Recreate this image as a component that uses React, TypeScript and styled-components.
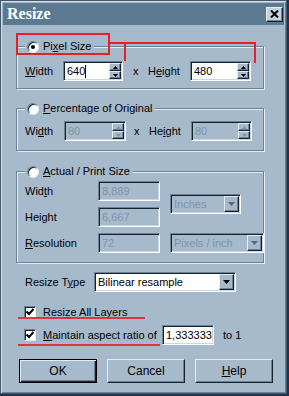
import styled, { createGlobalStyle } from "styled-components";

const BG = "#a6bacb";
const DARK = "#6b8396";
const LIGHT = "#e4edf3";
const BLACK = "#17222c";
const MUTED = "#7d95a9";
const RED = "#e3202b";

const GlobalStyle = createGlobalStyle`
  html, body {
    margin: 0;
    padding: 0;
  }
  body {
    width: 289px;
    height: 396px;
    overflow: hidden;
    background: #22324a;
    font-family: "Liberation Sans", Arial, sans-serif;
    font-size: 11px;
    color: #000;
  }
`;

const Dialog = styled.div`
  position: relative;
  width: 287px;
  height: 394px;
  box-sizing: border-box;
  padding: 2px;
  background: ${BG};
  border: 1px solid #44596d;
  box-shadow: inset 1px 1px 0 #d3dfe8, inset -1px -1px 0 #6a8194;
  display: flex;
  flex-direction: column;
`;

const TitleBar = styled.div`
  height: 22px;
  display: flex;
  align-items: center;
  justify-content: space-between;
  padding: 0 1px 0 4px;
  background: #5b7a91;
  color: #fff;
  font-family: "Liberation Serif", "Times New Roman", serif;
  font-weight: 700;
  font-size: 16px;
`;

const raised = `
  background: ${BG};
  border: 1px solid;
  border-color: ${LIGHT} ${BLACK} ${BLACK} ${LIGHT};
  box-shadow: inset -1px -1px 0 ${DARK};
  box-sizing: border-box;
`;

const CloseButton = styled.div`
  ${raised}
  background: #c4d3de;
  width: 17px;
  height: 15px;
  display: grid;
  place-items: center;
`;

const Body = styled.div`
  display: flex;
  flex-direction: column;
  padding-left: 13px;
`;

const Group = styled.fieldset<{ $top: number; $padTop: number; $padBottom: number }>`
  margin: ${({ $top }) => $top}px 0 0 0;
  width: 248px;
  box-sizing: border-box;
  min-inline-size: 0;
  padding: ${({ $padTop }) => $padTop}px 8px ${({ $padBottom }) => $padBottom}px 8px;
  border: 1px solid ${DARK};
  box-shadow: inset 1px 1px 0 ${LIGHT}, 1px 1px 0 ${LIGHT};
`;

const Legend = styled.legend`
  display: flex;
  align-items: center;
  gap: 4px;
  height: 13px;
  padding: 0 3px 0 2px;
  background: ${BG};
  line-height: 13px;
`;

const Radio = styled.span<{ $checked?: boolean }>`
  width: 12px;
  height: 12px;
  box-sizing: border-box;
  border-radius: 50%;
  background: #fff;
  border: 1px solid;
  border-color: ${DARK} ${LIGHT} ${LIGHT} ${DARK};
  box-shadow: inset 1px 1px 0 ${BLACK};
  display: grid;
  place-items: center;
  &::after {
    content: "";
    width: 4px;
    height: 4px;
    border-radius: 50%;
    background: ${({ $checked }) => ($checked ? "#000" : "transparent")};
  }
`;

const Row = styled.div`
  display: flex;
  align-items: center;
  height: 20px;
`;

const Label = styled.span<{ $w?: number; $ml?: number }>`
  width: ${({ $w }) => ($w ? `${$w}px` : "auto")};
  margin-left: ${({ $ml }) => $ml ?? 0}px;
  flex-shrink: 0;
  white-space: nowrap;
  line-height: 13px;
`;

const Field = styled.div<{ $w: number; $disabled?: boolean; $ml?: number }>`
  width: ${({ $w }) => $w}px;
  height: 20px;
  margin-left: ${({ $ml }) => $ml ?? 0}px;
  box-sizing: border-box;
  flex-shrink: 0;
  display: flex;
  align-items: center;
  padding-left: 3px;
  background: ${({ $disabled }) => ($disabled ? BG : "#fff")};
  color: ${({ $disabled }) => ($disabled ? MUTED : "#000")};
  border: 1px solid;
  border-color: ${DARK} #fff #fff ${DARK};
  box-shadow: inset 1px 1px 0 ${BLACK}, inset -1px -1px 0 #c9d6e0;
  white-space: nowrap;
  overflow: hidden;
`;

const Caret = styled.span`
  width: 1px;
  height: 13px;
  background: #000;
`;

const Spinner = styled.div`
  margin-left: auto;
  margin-right: 1px;
  width: 12px;
  height: 16px;
  display: flex;
  flex-direction: column;
`;

const SpinButton = styled.div`
  ${raised}
  height: 8px;
  display: grid;
  place-items: center;
`;

const DropButton = styled.div`
  ${raised}
  margin-left: auto;
  margin-right: 1px;
  width: 15px;
  height: 16px;
  flex-shrink: 0;
  display: grid;
  place-items: center;
`;

const SizeGrid = styled.div`
  display: grid;
  grid-template-columns: 63px 62px auto;
  grid-template-rows: repeat(3, 20px);
  column-gap: 10px;
  row-gap: 6px;
  align-items: center;
  & > * {
    justify-self: start;
  }
`;

const UnitCell = styled.div<{ $rows: string }>`
  grid-column: 3;
  grid-row: ${({ $rows }) => $rows};
  align-self: center;
`;

const TypeRow = styled(Row)`
  margin-top: 9px;
  padding-left: 9px;
`;

const CheckRow = styled(Row)<{ $top: number }>`
  margin-top: ${({ $top }) => $top}px;
  padding-left: 8px;
`;

const CheckBox = styled.span`
  width: 12px;
  height: 12px;
  box-sizing: border-box;
  margin-right: 7px;
  flex-shrink: 0;
  background: #fff;
  border: 1px solid;
  border-color: ${DARK} ${LIGHT} ${LIGHT} ${DARK};
  box-shadow: inset 1px 1px 0 ${BLACK};
  display: grid;
  place-items: center;
`;

const ButtonRow = styled.div`
  display: flex;
  gap: 10px;
  margin-top: 14px;
  padding-left: 3px;
`;

const Button = styled.div<{ $default?: boolean }>`
  width: 78px;
  height: 24px;
  box-sizing: border-box;
  display: flex;
  align-items: center;
  justify-content: center;
  background: ${BG};
  border: 1px solid;
  border-color: ${({ $default }) => ($default ? "#000" : `${LIGHT} ${BLACK} ${BLACK} ${LIGHT}`)};
  box-shadow: ${({ $default }) =>
    $default
      ? `inset 1px 1px 0 ${LIGHT}, inset -1px -1px 0 ${BLACK}, inset -2px -2px 0 ${DARK}`
      : `inset -1px -1px 0 ${DARK}`};
  font-size: 12px;
`;

const Overlay = styled.svg`
  position: absolute;
  top: -1px;
  left: -1px;
  pointer-events: none;
`;

function Arrow({ up, muted }: { up?: boolean; muted?: boolean }) {
  return (
    <svg width="5" height="3" viewBox="0 0 5 3">
      <path d={up ? "M2.5 0 L5 3 L0 3 Z" : "M0 0 L5 0 L2.5 3 Z"} fill={muted ? MUTED : "#000"} />
    </svg>
  );
}

function DownArrow({ muted }: { muted?: boolean }) {
  return (
    <svg width="7" height="4" viewBox="0 0 7 4">
      <path d="M0 0 L7 0 L3.5 4 Z" fill={muted ? "#55697b" : "#000"} />
    </svg>
  );
}

function Spin({ muted }: { muted?: boolean }) {
  return (
    <Spinner>
      <SpinButton>
        <Arrow up muted={muted} />
      </SpinButton>
      <SpinButton>
        <Arrow muted={muted} />
      </SpinButton>
    </Spinner>
  );
}

function Check() {
  return (
    <svg width="8" height="8" viewBox="0 0 8 8">
      <path d="M0.5 3.5 L3 6 L7.5 1" fill="none" stroke="#000" strokeWidth="2" />
    </svg>
  );
}

export default function App() {
  return (
    <>
      <GlobalStyle />
      <Dialog>
        <TitleBar>
          <span>Resize</span>
          <CloseButton>
            <svg width="9" height="8" viewBox="0 0 9 8">
              <path d="M1 0.5 L8 7.5 M8 0.5 L1 7.5" stroke="#000" strokeWidth="2" />
            </svg>
          </CloseButton>
        </TitleBar>
        <Body>
          <Group $top={15} $padTop={8} $padBottom={7}>
            <Legend>
              <Radio $checked />
              <span>
                Pi<u>x</u>el Size
              </span>
            </Legend>
            <Row>
              <Label $w={38}>
                <u>W</u>idth
              </Label>
              <Field $w={60}>
                640
                <Caret />
                <Spin />
              </Field>
              <Label $ml={10} $w={15}>
                x
              </Label>
              <Label $w={42}>
                H<u>e</u>ight
              </Label>
              <Field $w={61}>
                480
                <Spin />
              </Field>
            </Row>
          </Group>

          <Group $top={13} $padTop={6} $padBottom={9}>
            <Legend>
              <Radio />
              <span>
                <u>P</u>ercentage of Original
              </span>
            </Legend>
            <Row>
              <Label $w={39}>
                Wi<u>d</u>th
              </Label>
              <Field $w={62} $disabled>
                80
                <Spin muted />
              </Field>
              <Label $ml={8} $w={15}>
                x
              </Label>
              <Label $w={42}>
                He<u>i</u>ght
              </Label>
              <Field $w={61} $disabled>
                80
                <Spin muted />
              </Field>
            </Row>
          </Group>

          <Group $top={14} $padTop={3} $padBottom={9}>
            <Legend>
              <Radio />
              <span>
                <u>A</u>ctual / Print Size
              </span>
            </Legend>
            <SizeGrid>
              <Label>
                Wid<u>t</u>h
              </Label>
              <Field $w={62} $disabled>
                8,889
              </Field>
              <UnitCell $rows="1 / 3">
                <Field $w={71} $disabled>
                  Inches
                  <DropButton>
                    <DownArrow muted />
                  </DropButton>
                </Field>
              </UnitCell>
              <Label>Height</Label>
              <Field $w={62} $disabled>
                6,667
              </Field>
              <Label>
                <u>R</u>esolution
              </Label>
              <Field $w={62} $disabled>
                72
              </Field>
              <UnitCell $rows="3">
                <Field $w={94} $disabled>
                  Pixels / inch
                  <DropButton>
                    <DownArrow muted />
                  </DropButton>
                </Field>
              </UnitCell>
            </SizeGrid>
          </Group>

          <TypeRow>
            <Label $w={69}>
              Resize T<u>y</u>pe
            </Label>
            <Field $w={142}>
              Bilinear resample
              <DropButton>
                <DownArrow />
              </DropButton>
            </Field>
          </TypeRow>

          <CheckRow $top={10}>
            <CheckBox>
              <Check />
            </CheckBox>
            <Label>
              Resi<u>z</u>e All Layers
            </Label>
          </CheckRow>

          <CheckRow $top={3}>
            <CheckBox>
              <Check />
            </CheckBox>
            <Label $w={119}>
              <u>M</u>aintain aspect ratio of
            </Label>
            <Field $w={52}>1,333333</Field>
            <Label $ml={9}>to 1</Label>
          </CheckRow>

          <ButtonRow>
            <Button $default>OK</Button>
            <Button>Cancel</Button>
            <Button>
              <span>
                <u>H</u>elp
              </span>
            </Button>
          </ButtonRow>
        </Body>

        <Overlay width="287" height="394" viewBox="0 0 287 394">
          <rect x="17" y="34" width="92" height="20" fill="none" stroke={RED} strokeWidth="2" />
          <path d="M109 43 H255 V63 M125 43 V61" fill="none" stroke={RED} strokeWidth="2" />
          <path d="M18 318 H145" stroke={RED} strokeWidth="2" opacity="0.85" />
          <path d="M18 345 H160" stroke={RED} strokeWidth="2" opacity="0.85" />
        </Overlay>
      </Dialog>
    </>
  );
}
